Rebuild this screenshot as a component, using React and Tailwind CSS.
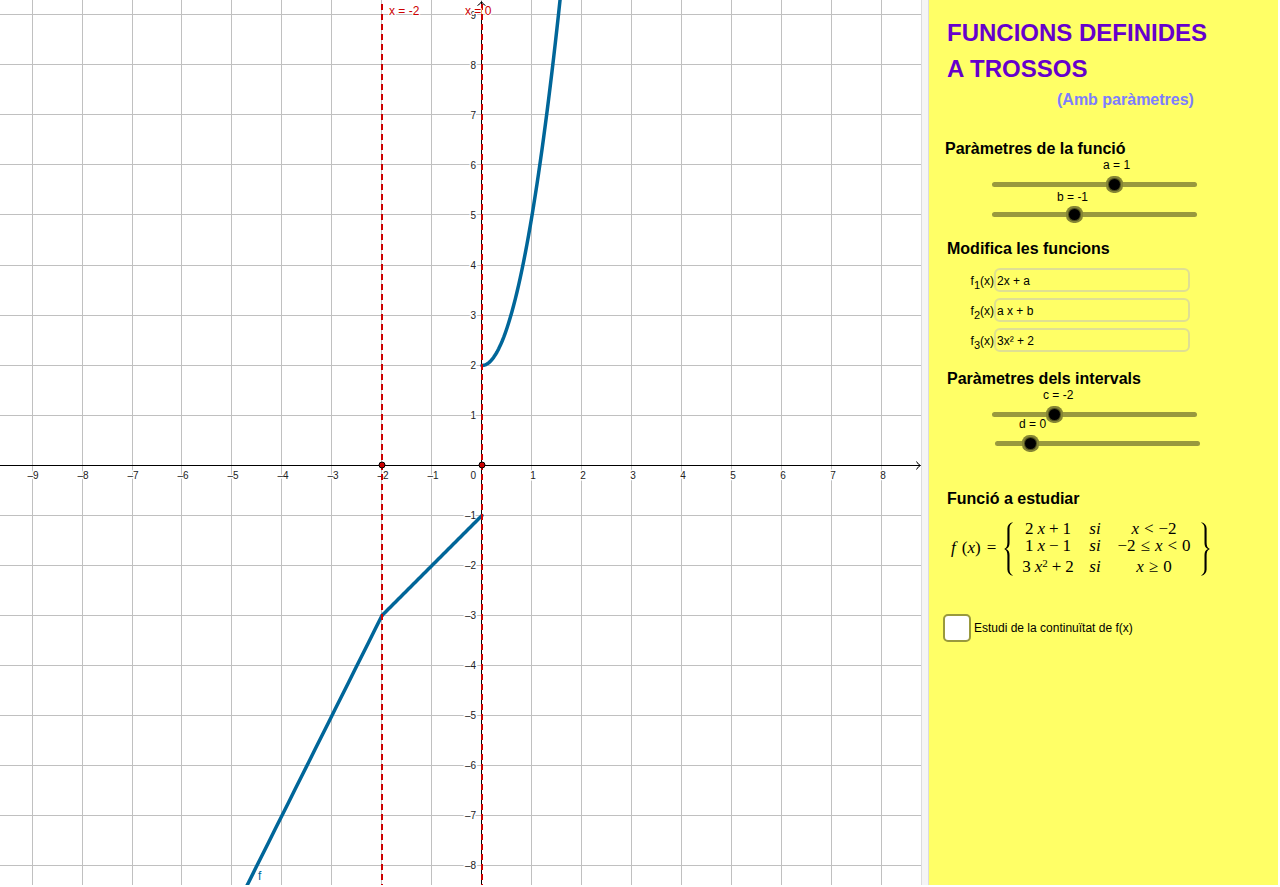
import React, { useState } from 'react';

const UNIT = 50;
const ORIGIN = { x: 482, y: 465 };
const GRID_X = [32, 82, 132, 181, 231, 281, 331, 381, 431, 481, 531, 581, 631, 681, 731, 781, 831, 881];
const GRID_Y = [14, 64, 114, 164, 214, 265, 315, 365, 415, 465, 515, 565, 615, 665, 715, 765, 815, 865];

const toX = (x) => ORIGIN.x + x * UNIT;
const toY = (y) => ORIGIN.y + 0.5 - y * UNIT;
const minus = (n) => (n < 0 ? `–${-n}` : `${n}`);

const plot = (fn, from, to) => {
    const steps = 60;
    const points = [];
    for (let i = 0; i <= steps; i++) {
        const x = from + ((to - from) * i) / steps;
        points.push(`${toX(x).toFixed(2)},${toY(fn(x)).toFixed(2)}`);
    }
    return points.join(' ');
};

const Graph = ({ a, b, c, d }) => (
    <svg viewBox="0 0 921 885" className="block w-full h-auto bg-white font-['Liberation_Sans',sans-serif]">
        <g fill="#c0c0c0">
            {GRID_X.map((x) => <rect key={x} x={x} y="0" width="1" height="885" />)}
            {GRID_Y.map((y) => <rect key={y} x="0" y={y} width="921" height="1" />)}
        </g>

        <g stroke="#000" fill="none">
            <path d="M0 465.5H920M916.5 461.5Q918 464.5 920.5 465.5Q918 466.5 916.5 469.5" />
            <path d="M481.5 885V2M477.5 5.5Q480.5 4 481.5 1.5Q482.5 4 485.5 5.5" />
        </g>

        <g fontSize="10" fill="#222" stroke="#fff" strokeWidth="3" strokeLinejoin="round" paintOrder="stroke">
            {GRID_X.map((x, i) => i !== 9 && (
                <text key={x} x={toX(i - 9) + 1} y="479" textAnchor="middle">{minus(i - 9)}</text>
            ))}
            <text x="476" y="479" textAnchor="end">0</text>
            {GRID_Y.map((y, i) => i !== 9 && (
                <text key={y} x="476" y={ORIGIN.y + 4 - (9 - i) * UNIT} textAnchor="end">{minus(9 - i)}</text>
            ))}
        </g>

        <g stroke="#006699" strokeWidth="3.5" fill="none" strokeLinecap="round" strokeLinejoin="round">
            <polyline points={plot((x) => 2 * x + a, -10, c)} />
            <polyline points={plot((x) => a * x + b, c, d)} />
            <polyline points={plot((x) => 3 * x * x + 2, d, d + 2)} />
        </g>

        <g stroke="#cc0000" strokeWidth="2" strokeDasharray="6 4">
            <line x1={toX(c)} x2={toX(c)} y1="4" y2="885" />
            <line x1={toX(d)} x2={toX(d)} y1="4" y2="885" />
        </g>
        <g fill="#cc0000" stroke="#000">
            <circle cx={toX(c)} cy="465" r="3" />
            <circle cx={toX(d)} cy="465" r="3" />
        </g>

        <g fontSize="12" stroke="#fff" strokeWidth="2" strokeLinejoin="round" paintOrder="stroke">
            <text x={toX(c) + 7} y="15" fill="#cc0000">x = {c}</text>
            <text x={toX(d) - 17} y="15" fill="#cc0000">x = {d}</text>
            <text x="258" y="880" fill="#006699">f</text>
        </g>
    </svg>
);

const Slider = ({ name, value, min, max, onChange, className = '', labelClassName }) => (
    <div className={`w-[205px] ${className}`}>
        <label htmlFor={name} className={`block text-xs leading-3 whitespace-nowrap ${labelClassName}`}>
            {name} = {value}
        </label>
        <input
            id={name}
            type="range"
            min={min}
            max={max}
            value={value}
            onChange={(e) => onChange(Number(e.target.value))}
            className="block w-full h-[5px] appearance-none rounded-full bg-[#99993d] cursor-pointer [&::-webkit-slider-thumb]:appearance-none [&::-webkit-slider-thumb]:w-[5px] [&::-webkit-slider-thumb]:h-[5px] [&::-webkit-slider-thumb]:rounded-full [&::-webkit-slider-thumb]:bg-black [&::-webkit-slider-thumb]:shadow-[0_0_0_3px_#000,0_0_0_4px_#4d4d1f,0_0_0_6px_#858535]"
        />
    </div>
);

const FunctionField = ({ index, defaultValue }) => (
    <div className="flex items-center">
        <label htmlFor={`f${index}`} className="w-[47px] pt-0.5 text-right text-xs whitespace-nowrap">
            f<sub className="text-[11px] leading-none -bottom-1">{index}</sub>(x)
        </label>
        <input
            id={`f${index}`}
            type="text"
            defaultValue={defaultValue}
            className="w-[196px] h-6 px-px pt-0.5 text-xs bg-transparent border-2 border-[#dfdf93] rounded-md outline-none"
        />
    </div>
);

const Heading = ({ children }) => <h2 className="text-base leading-5 font-bold">{children}</h2>;

const Brace = ({ className = '' }) => (
    <svg viewBox="0 0 9 54" className={`w-[9px] h-[54px] shrink-0 ${className}`} fill="#000">
        <path d="M8.6 0.2C5.6 1 3.4 3.2 3.4 6.5V20.5C3.4 24 2.6 26 0.2 27C2.6 28 3.4 30 3.4 33.5V47.5C3.4 50.8 5.6 53 8.6 53.8V53.2C6.6 52.2 5.5 50.4 5.5 47.5V33C5.5 30 4.6 28 2 27C4.6 26 5.5 24 5.5 21V6.5C5.5 3.6 6.6 1.8 8.6 0.8Z" />
    </svg>
);

const X = () => <i>x</i>;

const Case = ({ value, condition }) => (
    <>
        <span className="flex justify-center gap-1">{value}</span>
        <i className="text-center">si</i>
        <span className="flex justify-center gap-[5px]">{condition}</span>
    </>
);

const PiecewiseFormula = ({ a, b, c, d }) => (
    <div className="flex items-center text-[17px] leading-[18px] font-['Liberation_Serif',serif] whitespace-nowrap">
        <span className="flex gap-1.5 w-[57px] pl-1 pb-0.5">
            <i>f</i>
            <span>(<X />)</span>
            <span>=</span>
        </span>
        <Brace />
        <div className="grid grid-cols-[52px_12px_76px] grid-rows-[17px_21px_18px] items-start gap-x-[15px] px-[9px] pb-0.5">
            <Case
                value={<><span>2</span><X /><span>{a < 0 ? '−' : '+'}</span><span>{Math.abs(a)}</span></>}
                condition={<><X /><span>&lt;</span><span>{c < 0 ? '−' : ''}{Math.abs(c)}</span></>}
            />
            <Case
                value={<><span>{a}</span><X /><span>{b < 0 ? '−' : '+'}</span><span>{Math.abs(b)}</span></>}
                condition={<><span>{c < 0 ? '−' : ''}{Math.abs(c)}</span><span>≤</span><X /><span>&lt;</span><span>{d}</span></>}
            />
            <Case
                value={<><span>3</span><span><X /><sup className="text-[11px] leading-none">2</sup></span><span>+</span><span>2</span></>}
                condition={<><X /><span>≥</span><span>{d}</span></>}
            />
        </div>
        <Brace className="rotate-180" />
    </div>
);

export default function App() {
    const [a, setA] = useState(1);
    const [b, setB] = useState(-1);
    const [c, setC] = useState(-2);
    const [d, setD] = useState(0);

    return (
        <div className="flex min-h-screen pr-0.5 pb-0.5 bg-white text-black font-['Liberation_Sans',Arial,sans-serif]">
            <main className="flex-1 min-w-0">
                <Graph a={a} b={b} c={c} d={d} />
            </main>
            <div className="w-2 shrink-0 bg-[#f5f5f5] border-x border-[#dcdcdc]" />
            <aside className="w-[349px] shrink-0 pt-[15px] bg-[#ffff66]">
                <header className="pl-[18px]">
                    <h1 className="text-2xl leading-9 font-bold text-[#6600cc]">FUNCIONS DEFINIDES<br />A TROSSOS</h1>
                    <p className="mt-px pl-[110px] text-base font-bold text-[#7d7dff]">(Amb paràmetres)</p>
                </header>

                <section className="mt-[27px] pl-4">
                    <Heading>Paràmetres de la funció</Heading>
                    <Slider name="a" value={a} min={-5} max={5} onChange={setA} className="ml-[47px]" labelClassName="pl-[111px] mb-[11px]" />
                    <Slider name="b" value={b} min={-5} max={5} onChange={setB} className="ml-[47px] mt-1" labelClassName="pl-[65px] mb-[9px]" />
                </section>

                <section className="mt-[22px] pl-[18px]">
                    <Heading>Modifica les funcions</Heading>
                    <div className="flex flex-col gap-1.5 mt-[9px]">
                        <FunctionField index={1} defaultValue="2x + a" />
                        <FunctionField index={2} defaultValue="a x + b" />
                        <FunctionField index={3} defaultValue="3x² + 2" />
                    </div>
                </section>

                <section className="mt-[17px] pl-[18px]">
                    <Heading>Paràmetres dels intervals</Heading>
                    <Slider name="c" value={c} min={-5} max={5} onChange={setC} className="ml-[45px]" labelClassName="pl-[51px] mb-[11px]" />
                    <Slider name="d" value={d} min={-2} max={10} onChange={setD} className="ml-12 mt-px" labelClassName="pl-6 mb-[11px]" />
                </section>

                <section className="mt-[43px] pl-[18px]">
                    <Heading>Funció a estudiar</Heading>
                    <div className="mt-[11px]">
                        <PiecewiseFormula a={a} b={b} c={c} d={d} />
                    </div>
                </section>

                <div className="flex items-center gap-[3px] mt-9 pl-[14px]">
                    <input
                        id="continuitat"
                        type="checkbox"
                        className="w-7 h-7 appearance-none bg-white border-2 border-[#99993d] rounded-[5px] checked:bg-[#99993d]"
                    />
                    <label htmlFor="continuitat" className="text-xs">Estudi de la continuïtat de f(x)</label>
                </div>
            </aside>
        </div>
    );
}
